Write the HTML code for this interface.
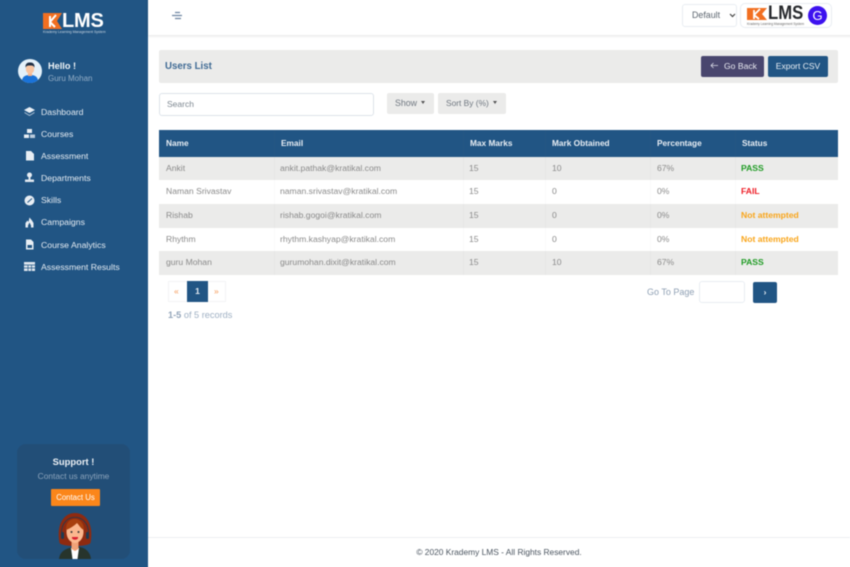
<!DOCTYPE html>
<html><head><meta charset="utf-8"><style>
*{box-sizing:border-box}
html,body{margin:0;padding:0;width:850px;height:567px;overflow:hidden;background:#fff;font-family:"Liberation Sans",sans-serif}
.a{position:absolute;white-space:nowrap}
#clip{position:absolute;left:0;top:0;width:850px;height:567px;overflow:hidden;contain:strict}
#root{position:absolute;left:0;top:0;width:850px;height:567px;filter:blur(.4px)}
.nav{left:41px;font-size:8.7px;color:#e4ebf2;line-height:11px}
.ic{position:absolute;left:24px}
.th{top:138px;font-size:8.3px;font-weight:bold;color:#e8eef4;line-height:11px}
.td{font-size:8.6px;color:#8a8a8a;line-height:11px}
.row{position:absolute;left:159px;width:679px;height:24px}
.vl{position:absolute;top:130px;width:1px;height:145px;background:rgba(120,120,120,.04)}
</style></head><body><div id="clip"><div id="root">
<div class="a" style="left:-6px;top:-6px;width:154px;height:579px;background:#215584"></div>
<div class="a" style="left:148px;top:-6px;width:708px;height:41px;background:#fff;box-shadow:0 1px 3px rgba(0,0,0,.12)"></div>

<!-- sidebar logo -->
<svg class="a" style="left:43px;top:12px" width="20" height="20" viewBox="0 0 20 20"><path d="M0 1H19L14 9 19 17H0Z" fill="#f26f21"/><path d="M7 4V15M7 10L13 3M7 10L12 15" stroke="#fff" stroke-width="2" fill="none"/></svg>
<div class="a" style="left:62px;top:10px;font-size:20px;font-weight:bold;color:#fff;line-height:22px;letter-spacing:-.2px">LMS</div>
<div class="a" style="left:43px;top:30px;font-size:3.5px;color:#cdd9e4;line-height:5px">Krademy Learning Management System</div>

<!-- user -->
<svg class="a" style="left:18px;top:59px" width="24" height="24" viewBox="0 0 24 24"><circle cx="12" cy="12" r="12" fill="#e4f1fa"/><path d="M4 21c1-4 4-5 8-5s7 1 8 5a12 12 0 0 1-16 0Z" fill="#1a73d9"/><rect x="10" y="13" width="4" height="4" fill="#f6b48c"/><ellipse cx="12" cy="10" rx="4.2" ry="5" fill="#f8c4a0"/><path d="M7.5 9C7 4 10 3.5 12 3.5S17 4 16.5 9C16 6.5 14 6.5 12 6.5S8 6.5 7.5 9Z" fill="#1f2f45"/></svg>
<div class="a" style="left:48px;top:60px;font-size:9.2px;font-weight:bold;color:#f1f5f8;line-height:12px">Hello !</div>
<div class="a" style="left:48px;top:73px;font-size:8px;color:#93adc6;line-height:11px">Guru Mohan</div>

<!-- nav -->
<svg class="ic" style="top:106px" width="11" height="11" viewBox="0 0 11 11"><path d="M5.5 1L11 4 5.5 7 0 4Z" fill="#e8eef4"/><path d="M.5 6L5.5 9 10.5 6V7L5.5 10 .5 7Z" fill="#b9cadb"/></svg>
<div class="a nav" style="top:107px">Dashboard</div>
<svg class="ic" style="top:128px" width="11" height="11" viewBox="0 0 11 11"><rect x="3" y="1" width="5" height="4" fill="#e8eef4"/><rect x="0" y="6.5" width="5" height="3.5" fill="#e8eef4"/><rect x="6" y="6.5" width="5" height="3.5" fill="#b9cadb"/></svg>
<div class="a nav" style="top:129px">Courses</div>
<svg class="ic" style="top:150px" width="11" height="11" viewBox="0 0 11 11"><path d="M2 1H7L10 4V10.5H2Z" fill="#e8eef4"/></svg>
<div class="a nav" style="top:151px">Assessment</div>
<svg class="ic" style="top:172px" width="11" height="11" viewBox="0 0 11 11"><circle cx="5.5" cy="3" r="2.5" fill="#e8eef4"/><path d="M4.5 5H6.5V7.5H10V10H1V7.5H4.5Z" fill="#dfe7ef"/></svg>
<div class="a nav" style="top:173px">Departments</div>
<svg class="ic" style="top:195px" width="11" height="11" viewBox="0 0 11 11"><circle cx="5.5" cy="5.5" r="5" fill="#e8eef4"/><path d="M3.5 7.5L8 3.5" stroke="#215584" stroke-width="1"/></svg>
<div class="a nav" style="top:195px">Skills</div>
<svg class="ic" style="top:217px" width="11" height="11" viewBox="0 0 11 11"><path d="M1.5 10.5V6L3.5 3.5 4.5 5 5.5 .5 8 3.5 9.5 6V10.5Z" fill="#e8eef4"/><path d="M5.5 5.5L7 8.5V10.5H4V8.5Z" fill="#215584"/></svg>
<div class="a nav" style="top:217px">Campaigns</div>
<svg class="ic" style="top:239px" width="11" height="11" viewBox="0 0 11 11"><path d="M2 .5H7L9.5 3V10.5H2Z" fill="#e8eef4"/><rect x="3.5" y="6" width="4.5" height="3" fill="#215584"/></svg>
<div class="a nav" style="top:240px">Course Analytics</div>
<svg class="ic" style="top:261px" width="11" height="11" viewBox="0 0 11 11"><rect x="0" y="1" width="11" height="9" fill="#dfe7ef"/><path d="M0 4H11M0 7H11M4 4V10M7.5 4V10" stroke="#215584" stroke-width=".7"/></svg>
<div class="a nav" style="top:262px">Assessment Results</div>

<!-- support card -->
<div class="a" style="left:17px;top:444px;width:113px;height:115px;background:#224e77;border-radius:9px"></div>
<div class="a" style="left:17px;top:456px;width:113px;text-align:center;font-size:9.4px;font-weight:bold;color:#eef2f6;line-height:12px">Support !</div>
<div class="a" style="left:17px;top:471px;width:113px;text-align:center;font-size:8.4px;color:#8ba3bb;line-height:11px">Contact us anytime</div>
<div class="a" style="left:51px;top:489px;width:49px;height:17px;background:#fb861a;border-radius:1px;text-align:center;font-size:7.8px;color:#fff;line-height:17px">Contact Us</div>
<svg class="a" style="left:56px;top:512px" width="38" height="47" viewBox="0 0 38 47"><path d="M3.5 31C0 12 8 1 19 1S38 12 34.5 31C31 35 7 35 3.5 31Z" fill="#8e2a10"/><path d="M3 47C4 39 10 36 19 35S34 39 35 47Z" fill="#27342c"/><path d="M15 36H23L21.5 47H16.5Z" fill="#fff"/><path d="M15.5 27H22.5V37L19 39 15.5 37Z" fill="#f0a278"/><ellipse cx="19" cy="20" rx="8.5" ry="11" fill="#fbb78e"/><path d="M10 18C10 9 15 7 19 7S28 10 28 18C25 17 23 13 21 11 18 14 13 17 10 18Z" fill="#a8400f"/><path d="M5.5 21C5.5 0 32.5 0 32.5 21" fill="none" stroke="#1d3a52" stroke-width=".8"/><rect x="5" y="20" width="3" height="7" rx="1.5" fill="#1d3a52"/><rect x="30" y="20" width="3" height="7" rx="1.5" fill="#1d3a52"/><circle cx="15.5" cy="20" r="1" fill="#333"/><circle cx="22.5" cy="20" r="1" fill="#333"/><path d="M16 26.5Q19 29 22 26.5V25H16Z" fill="#d9202f"/></svg>

<!-- topbar -->
<svg class="a" style="left:172px;top:11px" width="10" height="10" viewBox="0 0 10 10"><path d="M3 1.5H8M0 4.5H10M3 7.5H9" stroke="#6d84a1" stroke-width="1.2"/></svg>
<div class="a" style="left:682px;top:4px;width:55px;height:23px;border:1px solid #e8edf2;border-radius:3px;background:#fff"></div>
<div class="a" style="left:692px;top:10px;font-size:8.9px;color:#5d6670;line-height:11px">Default</div>
<svg class="a" style="left:729px;top:13px" width="7" height="5" viewBox="0 0 7 5"><path d="M1 1L3.5 3.5 6 1" stroke="#444" stroke-width="1.2" fill="none"/></svg>
<div class="a" style="left:740px;top:3px;width:92px;height:25px;border:1px solid #e8edf2;border-radius:5px;background:#fff"></div>
<svg class="a" style="left:747px;top:7px" width="21" height="15" viewBox="0 0 21 15"><path d="M0 1H20L15 7 20 13H0Z" fill="#f26f21"/><path d="M7 3V12M7 8L13 2M7 8L12 12" stroke="#fff" stroke-width="1.8" fill="none"/></svg>
<div class="a" style="left:768px;top:3px;font-size:19px;font-weight:bold;color:#26282c;line-height:22px;transform:scaleX(.88);transform-origin:left center">LMS</div>
<div class="a" style="left:747px;top:22px;font-size:3.2px;color:#666;line-height:4px">Krademy Learning Management System</div>
<div class="a" style="left:808px;top:6px;width:19px;height:19px;border-radius:50%;background:#3d12ef;color:#fff;font-size:13px;line-height:19px;text-align:center">G</div>

<!-- title bar -->
<div class="a" style="left:159px;top:50px;width:679px;height:33px;background:#ebebea;border-radius:2px"></div>
<div class="a" style="left:165px;top:60px;font-size:9.7px;font-weight:bold;color:#3f6a94;line-height:13px">Users List</div>
<div class="a" style="left:701px;top:56px;width:63px;height:21px;background:#49466e;border-radius:2px"></div>
<svg class="a" style="left:710px;top:62px" width="8" height="7" viewBox="0 0 8 7"><path d="M8 3.5H1M3.5 1L1 3.5 3.5 6" stroke="#d9dbe6" stroke-width=".8" fill="none"/></svg>
<div class="a" style="left:724px;top:61px;font-size:8.6px;color:#e8e9f0;line-height:11px">Go Back</div>
<div class="a" style="left:768px;top:56px;width:60px;height:21px;background:#215584;border-radius:2px;text-align:center;font-size:8.5px;color:#e8eef4;line-height:21px">Export CSV</div>

<!-- filters -->
<div class="a" style="left:159px;top:93px;width:215px;height:23px;border:1px solid #dde3ea;border-radius:3px;background:#fff"></div>
<div class="a" style="left:167px;top:99px;font-size:8.5px;color:#7d8790;line-height:11px">Search</div>
<div class="a" style="left:387px;top:93px;width:47px;height:21px;background:#ebebea;border-radius:2px"></div>
<div class="a" style="left:395px;top:98px;font-size:8.8px;color:#6f7780;line-height:11px">Show</div>
<div class="a" style="left:421px;top:101px;border:2.5px solid transparent;border-top:3px solid #555;border-bottom:0"></div>
<div class="a" style="left:438px;top:93px;width:68px;height:21px;background:#ebebea;border-radius:2px"></div>
<div class="a" style="left:446px;top:98px;font-size:8.4px;color:#6f7780;line-height:11px">Sort By (%)</div>
<div class="a" style="left:493px;top:101px;border:2.5px solid transparent;border-top:3px solid #555;border-bottom:0"></div>

<!-- table -->
<div class="a" style="left:159px;top:130px;width:679px;height:27px;background:#215584"></div>
<div class="row" style="top:157px;height:23px;background:#ebebea"></div>
<div class="row" style="top:204px;background:#ebebea"></div>
<div class="row" style="top:251px;background:#ebebea"></div>
<div class="vl" style="left:274px"></div><div class="vl" style="left:463px"></div><div class="vl" style="left:545px"></div><div class="vl" style="left:650px"></div><div class="vl" style="left:735px"></div>

<div class="a th" style="left:166px">Name</div><div class="a th" style="left:281px">Email</div><div class="a th" style="left:470px">Max Marks</div><div class="a th" style="left:552px">Mark Obtained</div><div class="a th" style="left:657px">Percentage</div><div class="a th" style="left:742px">Status</div>

<div class="a td" style="left:166px;top:163px">Ankit</div><div class="a td" style="left:280px;top:163px">ankit.pathak@kratikal.com</div><div class="a td" style="left:469px;top:163px">15</div><div class="a td" style="left:552px;top:163px">10</div><div class="a td" style="left:657px;top:163px">67%</div><div class="a td" style="left:741px;top:163px;color:#1e9b23;font-weight:bold">PASS</div>

<div class="a td" style="left:166px;top:186px">Naman Srivastav</div><div class="a td" style="left:280px;top:186px">naman.srivastav@kratikal.com</div><div class="a td" style="left:469px;top:186px">15</div><div class="a td" style="left:552px;top:186px">0</div><div class="a td" style="left:657px;top:186px">0%</div><div class="a td" style="left:741px;top:186px;color:#ee1c25;font-weight:bold">FAIL</div>

<div class="a td" style="left:166px;top:210px">Rishab</div><div class="a td" style="left:280px;top:210px">rishab.gogoi@kratikal.com</div><div class="a td" style="left:469px;top:210px">15</div><div class="a td" style="left:552px;top:210px">0</div><div class="a td" style="left:657px;top:210px">0%</div><div class="a td" style="left:741px;top:210px;color:#f9a51a;font-weight:bold">Not attempted</div>

<div class="a td" style="left:166px;top:234px">Rhythm</div><div class="a td" style="left:280px;top:234px">rhythm.kashyap@kratikal.com</div><div class="a td" style="left:469px;top:234px">15</div><div class="a td" style="left:552px;top:234px">0</div><div class="a td" style="left:657px;top:234px">0%</div><div class="a td" style="left:741px;top:234px;color:#f9a51a;font-weight:bold">Not attempted</div>

<div class="a td" style="left:166px;top:257px">guru Mohan</div><div class="a td" style="left:280px;top:257px">gurumohan.dixit@kratikal.com</div><div class="a td" style="left:469px;top:257px">15</div><div class="a td" style="left:552px;top:257px">10</div><div class="a td" style="left:657px;top:257px">67%</div><div class="a td" style="left:741px;top:257px;color:#1e9b23;font-weight:bold">PASS</div>

<!-- pagination -->
<div class="a" style="left:168px;top:281px;width:58px;height:21px;border:1px solid #f3f4f6"></div>
<div class="a" style="left:174px;top:286px;font-size:8.5px;color:#f59a58;line-height:11px">«</div>
<div class="a" style="left:187px;top:281px;width:21px;height:21px;background:#215584;color:#e8eef4;font-size:8.5px;font-weight:bold;line-height:21px;text-align:center">1</div>
<div class="a" style="left:214px;top:286px;font-size:8.5px;color:#f59a58;line-height:11px">»</div>
<div class="a" style="left:168px;top:309px;font-size:9.2px;color:#9fb0c3;line-height:12px"><b style="color:#93a5ba">1-5</b> of 5 records</div>
<div class="a" style="left:647px;top:286px;font-size:9px;color:#8fa0b4;line-height:12px">Go To Page</div>
<div class="a" style="left:699px;top:281px;width:46px;height:22px;border:1px solid #e8edf2;border-radius:3px;background:#fff"></div>
<div class="a" style="left:753px;top:282px;width:24px;height:21px;background:#215584;border-radius:2px;color:#e8eef4;font-size:8.5px;font-weight:bold;line-height:20px;text-align:center">›</div>

<!-- footer -->
<div class="a" style="left:148px;top:537px;width:702px;height:1px;background:#eceef1"></div>
<div class="a" style="left:148px;top:547px;width:702px;text-align:center;font-size:8.4px;color:#4b5560;line-height:11px">© 2020 Krademy LMS - All Rights Reserved.</div>
</div></div></body></html>
